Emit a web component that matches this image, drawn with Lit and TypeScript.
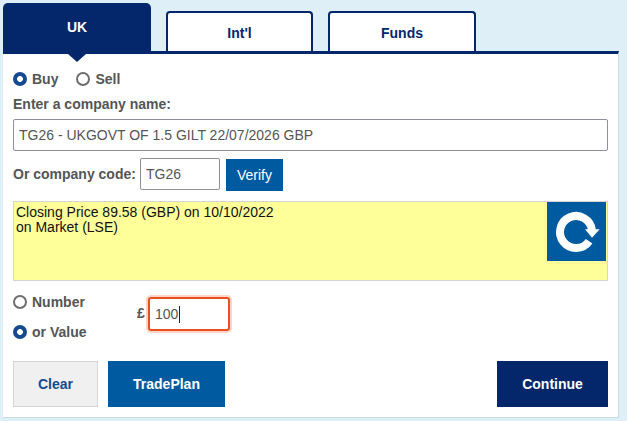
import { LitElement, html, css } from "lit";
import { customElement } from "lit/decorators.js";

@customElement("app-root")
export class AppRoot extends LitElement {
  static styles = css`
    :host { display: block; width: 627px; height: 421px; background: #dfeff8; font-family: "Liberation Sans", Arial, sans-serif; overflow: hidden; }
    * { box-sizing: border-box; }
    .wrap { padding: 3px 0 0 3px; width: 619px; }
    .tabs { display: flex; align-items: flex-end; height: 48px; gap: 15px; }
    .tab { width: 148px; height: 40px; background: #fff; border: 2px solid #03276a; border-bottom: 0; border-radius: 4px 4px 0 0; color: #03276a; font-weight: 700; font-size: 14px; display: flex; align-items: center; justify-content: center; padding-top: 1px; }
    .tab.mid { width: 147px; }
    .tab.active { height: 48px; background: #03276a; color: #fff; position: relative; align-items: flex-start; padding-top: 16px; border: 0; border-radius: 5px 5px 0 0; }
    .tab.active::after { content: ""; position: absolute; left: 65px; top: 51px; border: 9px solid transparent; border-top: 8px solid #03276a; border-bottom: 0; }
    .panel { width: 616px; height: 367px; background: #fff; border-top: 3px solid #03276a; border-right: 1px solid #c6dde9; border-bottom: 1px solid #c6dde9; padding: 0 10px; display: flex; flex-direction: column; }
    .radios { display: flex; height: 18px; margin-top: 16px; gap: 18px; }
    .opt { display: flex; align-items: center; gap: 5px; font-size: 14px; font-weight: 700; color: #555; height: 18px; }
    .radio { width: 14px; height: 14px; border-radius: 50%; border: 2px solid #6e6e6e; background: #fff; flex: none; }
    .radio.on { border: 0; background: radial-gradient(circle, #fff 0 2.6px, #164a90 3.2px); }
    .lbl { font-size: 14px; font-weight: 700; color: #555; }
    .name-lbl { margin-top: 8px; height: 17px; line-height: 17px; }
    input { font-family: inherit; font-size: 14px; color: #555; background: #fff; outline: none; border: 1px solid #8f8f9d; border-radius: 2px; padding: 0 5px; display: block; margin: 0; }
    .name { width: 595px; height: 32px; margin-top: 6px; }
    .code-row { display: flex; align-items: flex-start; margin-top: 7px; height: 33px; }
    .code-row .lbl { width: 127px; line-height: 32px; }
    .code { width: 80px; height: 32px; }
    .verify { width: 57px; height: 32px; margin-left: 6px; margin-top: 1px; background: #005a9f; color: #fff; font-size: 14px; display: flex; align-items: center; justify-content: center; }
    .note { width: 595px; height: 80px; margin-top: 10px; background: #ffff99; border: 1px solid #d4d4d4; padding: 3px 1px 0 2px; display: flex; justify-content: space-between; align-items: flex-start; font-size: 14px; line-height: 15px; color: #111; }
    .refresh { width: 59px; height: 59px; margin-top: -3px; background: #005a9f; flex: none; }
    .refresh svg { display: block; }
    .qty { display: flex; margin-top: 12px; height: 50px; }
    .qty-opts { width: 124px; display: flex; flex-direction: column; gap: 12px; }
    .cur { display: flex; align-items: flex-start; height: 50px; }
    .pound { font-size: 14px; font-weight: 700; color: #555; width: 11px; margin-top: 12px; }
    .focus { width: 82px; height: 34px; margin-top: 4px; border: 2px solid #e8501f; border-radius: 3px; box-shadow: 0 0 0 2px #ffd5c7; font-size: 14px; color: #555; display: flex; align-items: center; padding-left: 5px; }
    .caret { width: 1px; height: 17px; background: #222; margin-left: 1px; }
    .actions { display: flex; margin-top: 18px; height: 46px; }
    .btn { height: 46px; display: flex; align-items: center; justify-content: center; font-size: 14px; font-weight: 700; color: #fff; }
    .clear { width: 85px; background: #f0f0f0; border: 1px solid #d4d4d4; color: #164a90; }
    .plan { width: 117px; margin-left: 10px; background: #005a9f; }
    .cont { width: 111px; margin-left: 272px; background: #03276a; }
  `;

  render() {
    return html`<div class="wrap">
      <div class="tabs">
        <div class="tab active">UK</div>
        <div class="tab mid">Int'l</div>
        <div class="tab">Funds</div>
      </div>
      <div class="panel">
        <div class="radios">
          <div class="opt"><span class="radio on"></span>Buy</div>
          <div class="opt"><span class="radio"></span>Sell</div>
        </div>
        <div class="lbl name-lbl">Enter a company name:</div>
        <input class="name" .value=${"TG26 - UKGOVT OF 1.5 GILT 22/07/2026 GBP"} />
        <div class="code-row">
          <span class="lbl">Or company code:</span>
          <input class="code" .value=${"TG26"} />
          <div class="verify">Verify</div>
        </div>
        <div class="note">
          <div>Closing Price 89.58 (GBP) on 10/10/2022<br />on Market (LSE)</div>
          <div class="refresh">
            <svg width="59" height="59" viewBox="0 0 59 59" aria-hidden="true">
              <path d="M42.1 39.2A16 16 0 1 1 44.9 28" fill="none" stroke="#fff" stroke-width="8" />
              <path d="M38 27.3H52.7L45 35.8Z" fill="#fff" />
            </svg>
          </div>
        </div>
        <div class="qty">
          <div class="qty-opts">
            <div class="opt"><span class="radio"></span>Number</div>
            <div class="opt"><span class="radio on"></span>or Value</div>
          </div>
          <div class="cur">
            <span class="pound">£</span>
            <div class="focus">100<span class="caret"></span></div>
          </div>
        </div>
        <div class="actions">
          <div class="btn clear">Clear</div>
          <div class="btn plan">TradePlan</div>
          <div class="btn cont">Continue</div>
        </div>
      </div>
    </div>`;
  }
}
